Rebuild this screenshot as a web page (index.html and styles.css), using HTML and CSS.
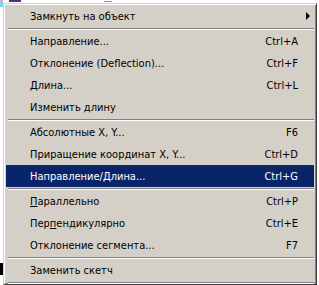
FILE: index.html
```html
<!DOCTYPE html>
<html lang="ru">
<head>
  <meta charset="UTF-8" />
  <title>Меню</title>
  <link rel="stylesheet" href="styles.css">
</head>
<body>
  <div class="desk">
    <span class="bit bit-cyan"></span>
    <span class="bit bit-purple"></span>
    <span class="bit bit-green"></span>
    <span class="bit bit-black"></span>

    <div class="menu">
      <div class="item has-sub"><span class="label">Замкнуть на объект</span><span class="key"></span></div>
      <div class="sep"></div>
      <div class="item"><span class="label">Направление...</span><span class="key">Ctrl+A</span></div>
      <div class="item"><span class="label">Отклонение (Deflection)...</span><span class="key">Ctrl+F</span></div>
      <div class="item"><span class="label">Длина...</span><span class="key">Ctrl+L</span></div>
      <div class="item"><span class="label">Изменить длину</span><span class="key"></span></div>
      <div class="sep"></div>
      <div class="item"><span class="label">Абсолютные X, Y...</span><span class="key">F6</span></div>
      <div class="item"><span class="label">Приращение координат X, Y...</span><span class="key">Ctrl+D</span></div>
      <div class="item active"><span class="label">Направление/Длина...</span><span class="key">Ctrl+G</span></div>
      <div class="sep"></div>
      <div class="item"><span class="label"><u>П</u>араллельно</span><span class="key">Ctrl+P</span></div>
      <div class="item"><span class="label">Пер<u>п</u>ендикулярно</span><span class="key">Ctrl+E</span></div>
      <div class="item"><span class="label">Отклонение сегмента...</span><span class="key">F7</span></div>
      <div class="sep"></div>
      <div class="item"><span class="label">Заменить скетч</span><span class="key"></span></div>
      <div class="sep"></div>
    </div>
  </div>
</body>
</html>
```

FILE: styles.css
```css
body {
  margin: 0;
  background: #fff;
  font-family: 'DejaVu Sans Condensed', 'DejaVu Sans', sans-serif;
  font-size: 11px;
  color: #000;
  overflow: hidden;
}

.desk {
  position: relative;
  padding: 3px 0 0 3px;
  height: 285px;
  box-sizing: border-box;
}

/* bits of the drawing behind the menu */
.bit {
  position: absolute;
  display: block;
}
.bit-cyan { left: 0; top: 0; width: 3px; height: 6px; background: #7fd8e0; border-top: 1px solid #e8a0c8; }
.bit-purple { left: 9px; top: 0; width: 12px; height: 2px; background: #5a3070; }
.bit-green { left: 104px; top: 1px; width: 8px; height: 1px; background: #60b060; }
.bit-black { left: 0; top: 263px; width: 3px; height: 12px; background: #000; }

.menu {
  width: 314px;
  box-sizing: border-box;
  background: #d4d0c8;
  border: 1px solid;
  border-color: #d4d0c8 #404040 #404040 #d4d0c8;
  box-shadow: inset 1px 1px #fff, inset -1px -1px #808080;
  padding: 1px 2px 0 2px;
}

.item {
  display: grid;
  grid-template-columns: 1fr auto 16px;
  align-items: center;
  height: 22px;
  padding-left: 24px;
  white-space: nowrap;
}

.item::after {
  content: '';
}

.item.has-sub::after {
  width: 0;
  height: 0;
  margin-left: 8px;
  border-left: 4px solid #000;
  border-top: 4px solid transparent;
  border-bottom: 4px solid transparent;
}

.item.active {
  background: #0a246a;
  color: #fff;
}

.key {
  text-align: right;
}

.sep {
  margin-top: 1px;
  margin-left: 2px;
  border-top: 1px solid #808080;
  border-bottom: 1px solid #fff;
  height: 0;
}
```
